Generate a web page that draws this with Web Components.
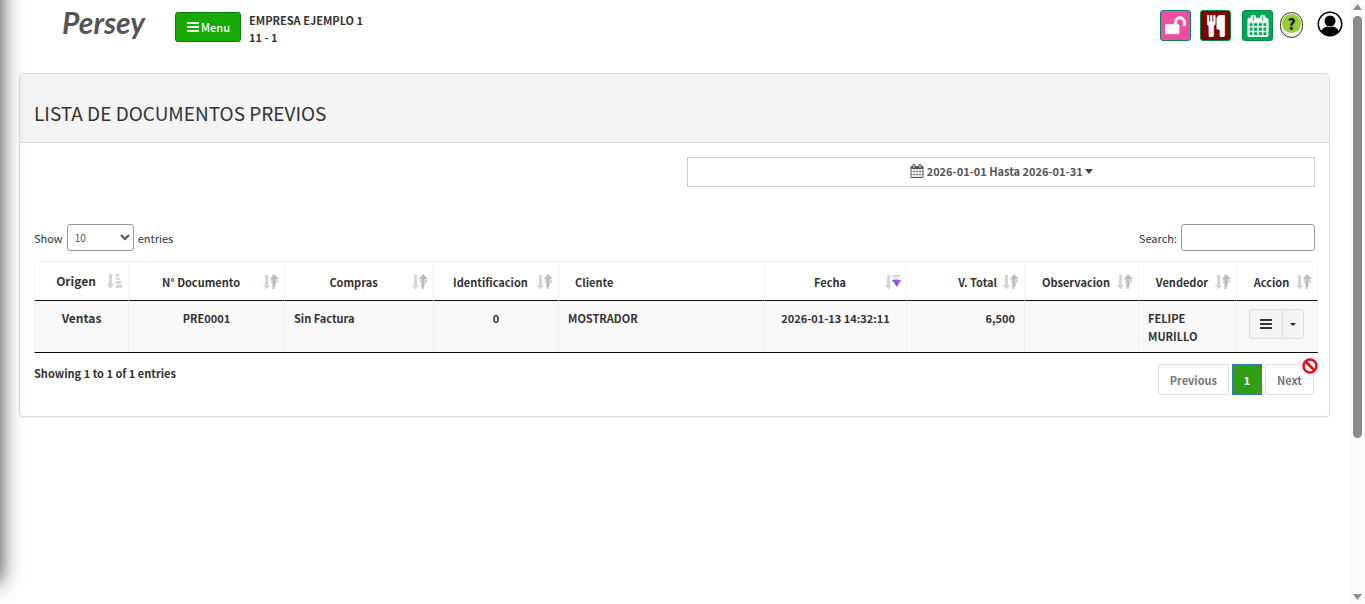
<!DOCTYPE html>
<html lang="es">
<head>
<meta charset="utf-8">
<title>Lista de documentos previos</title>
<style>
html,body{margin:0;height:100%}
body{font:400 11px/18px "Noto Sans CJK SC","Noto Sans",sans-serif;color:#333;background:#fff}
</style>
</head>
<body>
<app-shell>
  <top-bar slot="top" company="EMPRESA EJEMPLO 1" code="11 - 1"></top-bar>
  <content-panel heading="LISTA DE DOCUMENTOS PREVIOS">
    <date-range from="2026-01-01" to="2026-01-31"></date-range>
    <documents-table></documents-table>
  </content-panel>
</app-shell>
<script>
const ICONS = {
  unlock: 'M1664 576v256q0 26-19 45t-45 19h-64q-26 0-45-19t-19-45v-256q0-106-75-181t-181-75-181 75-75 181v192h96q40 0 68 28t28 68v576q0 40-28 68t-68 28h-960q-40 0-68-28t-28-68v-576q0-40 28-68t68-28h672v-192q0-185 131.5-316.5t316.5-131.5 316.5 131.5 131.5 316.5z',
  cutlery: 'M832 64v640q0 61-35.5 111t-92.5 70v779q0 52-38 90t-90 38h-128q-52 0-90-38t-38-90v-779q-57-20-92.5-70t-35.5-111v-640q0-26 19-45t45-19 45 19 19 45v416q0 26 19 45t45 19 45-19 19-45v-416q0-26 19-45t45-19 45 19 19 45v416q0 26 19 45t45 19 45-19 19-45v-416q0-26 19-45t45-19 45 19 19 45zm768 0v1600q0 52-38 90t-90 38h-128q-52 0-90-38t-38-90v-512h-224q-13 0-22.5-9.5t-9.5-22.5v-800q0-132 94-226t226-94h256q26 0 45 19t19 45z',
  calendar: 'M192 1664h288v-288h-288v288zm352 0h320v-288h-320v288zm-352-352h288v-320h-288v320zm352 0h320v-320h-320v320zm-352-384h288v-288h-288v288zm736 736h320v-288h-320v288zm-384-736h320v-288h-320v288zm768 736h288v-288h-288v288zm-384-352h320v-320h-320v320zm-352-864v-288q0-13-9.5-22.5t-22.5-9.5h-64q-13 0-22.5 9.5t-9.5 22.5v288q0 13 9.5 22.5t22.5 9.5h64q13 0 22.5-9.5t9.5-22.5zm736 864h288v-320h-288v320zm-384-384h320v-288h-320v288zm384 0h288v-288h-288v288zm32-480v-288q0-13-9.5-22.5t-22.5-9.5h-64q-13 0-22.5 9.5t-9.5 22.5v288q0 13 9.5 22.5t22.5 9.5h64q13 0 22.5-9.5t9.5-22.5zm384-64v1280q0 52-38 90t-90 38h-1408q-52 0-90-38t-38-90v-1280q0-52 38-90t90-38h128v-96q0-66 47-113t113-47h64q66 0 113 47t47 113v96h384v-96q0-66 47-113t113-47h64q66 0 113 47t47 113v96h128q52 0 90 38t38 90z',
  bars: 'M1664 1344v128q0 26-19 45t-45 19h-1408q-26 0-45-19t-19-45v-128q0-26 19-45t45-19h1408q26 0 45 19t19 45zm0-512v128q0 26-19 45t-45 19h-1408q-26 0-45-19t-19-45v-128q0-26 19-45t45-19h1408q26 0 45 19t19 45zm0-512v128q0 26-19 45t-45 19h-1408q-26 0-45-19t-19-45v-128q0-26 19-45t45-19h1408q26 0 45 19t19 45z'
};
const define = (name, render) => customElements.define(name, class extends HTMLElement {
  connectedCallback() {
    if (this.shadowRoot) return;
    this.attachShadow({ mode: 'open' }).innerHTML = '<style>*{box-sizing:border-box}</style>' + render(this);
  }
});

define('fa-icon', el => `
<style>:host{display:inline-block;width:var(--size,14px);height:var(--size,14px)}svg{display:block;width:100%;height:100%;fill:currentColor;stroke:currentColor;stroke-width:var(--weight,0)}</style>
<svg viewBox="0 0 1792 1792" aria-hidden="true"><path d="${ICONS[el.getAttribute('name')]}"/></svg>`);

define('app-shell', () => `
<style>
:host{display:grid;grid-template-columns:minmax(0,1fr) 15px;min-height:100vh}
main{padding:0 20px 0 19px}
.drawer{position:fixed;top:-20px;left:-230px;bottom:22px;width:230px;box-shadow:0 0 20px 0 rgba(0,0,0,.8)}
</style>
<main><slot name="top"></slot><slot></slot></main>
<scroll-rail></scroll-rail>
<div class="drawer"></div>`);

define('scroll-rail', () => `
<style>
:host{position:sticky;top:0;height:100vh;display:flex;flex-direction:column;align-items:center;box-sizing:border-box;background:#fbfbfb;padding:4px 0}
svg{display:block;width:9px;height:6px;fill:#8b8b8b;flex:none}
.track{flex:1;padding-top:6px}
.thumb{width:9px;height:73%;border-radius:5px;background:#8b8b8b}
</style>
<svg viewBox="0 0 9 6"><path d="M0 6 4.500 0 9 6z"/></svg>
<div class="track"><div class="thumb"></div></div>
<svg viewBox="0 0 9 6"><path d="M0 0h9L4.500 6z"/></svg>`);

define('top-bar', el => `
<style>
:host{display:flex;align-items:flex-start;height:73px;padding-left:43px;margin-right:-13px}
.logo{width:113px;flex:none;font:italic 700 30px/44px Lato,cursive;color:#555;text-decoration:none}
.menu{display:flex;align-items:center;justify-content:center;margin:12px 8px 0 0;width:66px;height:30px;padding:0;gap:1px;border:1px solid #0c7a0c;border-radius:3px;background:#18a905;color:#fff;font:inherit;font-weight:500}
.company{margin:12px auto 0 0;line-height:17px;font-weight:700}
nav{display:flex;gap:9px;padding-top:10px}
</style>
<a class="logo" href="#">Persey</a>
<button class="menu"><fa-icon name="bars"></fa-icon>Menu</button>
<div class="company">${el.getAttribute('company')}<br>${el.getAttribute('code')}</div>
<nav>
<tool-button icon="unlock" label="Abrir caja" style="--bg:#f04ca6"></tool-button>
<tool-button icon="cutlery" label="Restaurante" style="--bg:#800000"></tool-button>
<tool-button icon="calendar" label="Calendario" style="--bg:#00a65a;margin-left:2px"></tool-button>
<help-button></help-button><user-button></user-button>
</nav>`);

define('tool-button', el => `
<style>:host{display:block}button{display:flex;align-items:center;justify-content:center;width:31px;height:31px;padding:0;border:1px solid #008d4c;border-radius:3px;background:var(--bg);color:#fff;--size:22px;--weight:50}</style>
<button aria-label="${el.getAttribute('label')}"><fa-icon name="${el.getAttribute('icon')}"></fa-icon></button>`);

define('help-button', () => `
<style>:host{display:block;margin:2px 5px 0 -2px}
button{display:block;width:23px;height:26px;padding:0 1px 3px;border:1px solid #333;border-radius:12px;background:#f0f0f0}
span{display:block;width:19px;height:19px;border-radius:50%;background:#9acd32;color:#111;font:900 15px/19px "Noto Sans CJK SC",sans-serif}</style>
<button aria-label="Ayuda"><span>?</span></button>`);

define('user-button', () => `
<style>:host{display:block;margin-top:1px}button{display:block;width:26px;height:26px;padding:0;border:0;background:none}svg{display:block}</style>
<button aria-label="Usuario"><svg width="26" height="26" viewBox="0 0 26 26"><circle cx="13" cy="13" r="11.700" fill="#fff" stroke="#000" stroke-width="1.600"/><circle cx="13" cy="10" r="5.500"/><path d="M4 21c1-4 4-5 6-5.500q3 1.500 6 0c2 .5 5 1.500 6 5.500a12 12 0 0 1-18 0z"/></svg></button>`);

define('content-panel', el => `
<style>
:host{display:block;border:1px solid #ddd;border-radius:4px;background:#fff;box-shadow:0 1px 1px rgba(0,0,0,.05)}
header{padding:28px 14px 19px;border-bottom:1px solid #ddd;background:#f4f4f4;border-radius:3px 3px 0 0}
h1{margin:0;font-size:19px;line-height:21px;font-weight:400}
section{padding:14px 14px 21px}
</style>
<header><h1>${el.getAttribute('heading')}</h1></header>
<section><slot></slot></section>`);

define('date-range', el => `
<style>
:host{display:flex;justify-content:flex-end}
button{display:flex;align-items:center;justify-content:center;width:49%;height:30px;padding:0 0 2px;border:1px solid #ccc;background:#fff;color:#555;font:inherit;font-weight:700}
fa-icon{margin-right:3px}
svg{margin-left:2px}
</style>
<button><fa-icon name="calendar"></fa-icon>${el.getAttribute('from')} Hasta ${el.getAttribute('to')}<svg width="8" height="5" viewBox="0 0 8 5" fill="#444"><path d="M0 0h8L4 5z"/></svg></button>`);

define('sort-icon', el => {
  const dir = el.getAttribute('dir');
  const bars = '<path d="M9 1h3v3H9zM9 5h4v2H9zM9 8h5v3H9zM9 12h6v3H9z"/>';
  const both = '<path d="M8 4h6v2H8zM8 6h7v3H8zM9 9h4v3H9zM9 12h3v3H9z"/><path fill="#bbb" d="M11 0l5 5h-4v8h-2V5H7z"/>';
  const desc = '<path d="M8 1h7v2H8zM8 4h6v2H8z"/><path fill="#9b4fd6" d="M7 6h9l-4 7z"/>';
  return `<style>:host{display:block;width:16px;height:16px;flex:none}svg{display:block}</style>
<svg width="16" height="16" fill="#d5d5d5" aria-hidden="true"><path d="M2 1h3v10h2l-3 4h-1l-3-4h2z"/>${dir === 'asc' ? bars : dir === 'desc' ? desc : both}</svg>`;
});

define('documents-table', () => {
  const cols = [['Origen',94,'asc'],['N° Documento',156],['Compras',149],['Identificacion',125],['Cliente',206,'none'],['Fecha',142,'desc'],['V. Total',118,'both','right'],['Observacion',114],['Vendedor',98],['Accion',81]];
  return `
<style>
:host{display:block;padding-top:37px}
.controls,.foot{display:flex;justify-content:space-between}
.controls{align-items:center}
label{display:flex;align-items:center;gap:4px}
select,input{height:27px;border:1px solid #999;border-radius:3px;background:#fff;color:#555;font:inherit}
select{width:67px;padding:0 0 0 3px;font-size:10px}
input{width:134px}
table{width:calc(100% + 2px);margin-top:10px;border-collapse:separate;border-spacing:0;table-layout:fixed;border-top:1px solid #f0f0f0;border-left:1px solid #f0f0f0;border-bottom:1px solid #111;font-weight:700}
th,td{border-right:1px solid #f0f0f0}
th{height:39px;padding:0;border-bottom:1px solid #111}
.head{display:flex;align-items:center;padding:2px 5px 0 10px}
.head span{flex:1;white-space:nowrap;text-align:center}
.right span{text-align:right;padding-right:6px}
.head.left{padding-left:16px}.left span{text-align:left}
.head.first{padding-top:0}
.big{font-size:12px}
td{padding:8px 9px 7px;vertical-align:top;background:#f9f9f9;text-align:center}
td.l{text-align:left}td.r{text-align:right}
.foot{padding-top:11px;font-weight:700}
</style>
<div class="controls">
<label>Show <select><option>10</option><option>25</option><option>50</option></select> entries</label>
<label>Search: <input type="search"></label>
</div>
<table>
<colgroup>${cols.map(c => `<col style="width:${c[1]}px">`).join('')}</colgroup>
<thead><tr>${cols.map(([t, w, d = 'both', a = ''], i) => `<th><div class="head ${a} ${d === 'none' ? 'left' : ''} ${i ? '' : 'first big'}"><span>${t}</span>${d === 'none' ? '' : `<sort-icon dir="${d}"></sort-icon>`}</div></th>`).join('')}</tr></thead>
<tbody><tr><td class="big">Ventas</td><td>PRE0001</td><td class="l">Sin Factura</td><td>0</td><td class="l">MOSTRADOR</td><td>2026-01-13 14:32:11</td><td class="r">6,500</td><td></td><td class="l">FELIPE MURILLO</td><td><row-actions></row-actions></td></tr></tbody>
</table>
<div class="foot"><div>Showing 1 to 1 of 1 entries</div><page-nav></page-nav></div>`;
});

define('row-actions', () => `
<style>
:host{display:flex;padding-left:3px}
button{display:flex;align-items:center;justify-content:center;width:34px;height:30px;padding:0;border:1px solid #ddd;background:#f4f4f4;color:#333;border-radius:3px 0 0 3px}
button+button{width:22px;margin-left:-1px;border-radius:0 3px 3px 0}
</style>
<button aria-label="Acciones"><fa-icon name="bars"></fa-icon></button>
<button aria-label="Más acciones"><svg width="6" height="3" viewBox="0 0 6 3" fill="#222"><path d="M0 0h6L3 3z"/></svg></button>`);

define('page-nav', () => `
<style>
:host{display:flex;gap:3px;position:relative;padding-right:1px}
button{height:31px;padding:0 11px;border:1px solid #ddd;background:#fff;color:#777;font:inherit;font-weight:700}
.prev{border-radius:3px 0 0 3px}.next{border-radius:0 3px 3px 0}
.on{width:30px;padding:0;color:#fff;border-color:#337ab7;background:repeating-linear-gradient(45deg,#18a905 0 1px,#4f8f27 1px 2px)}
svg{position:absolute;right:-3px;top:-6px}
</style>
<button class="prev">Previous</button><button class="on">1</button><button class="next">Next</button>
<svg width="16" height="16" fill="none" stroke="#e3101a" stroke-width="2.500"><circle cx="8" cy="8" r="6.500"/><path d="M3.500 3.500l9 9"/></svg>`);
</script>
</body>
</html>
